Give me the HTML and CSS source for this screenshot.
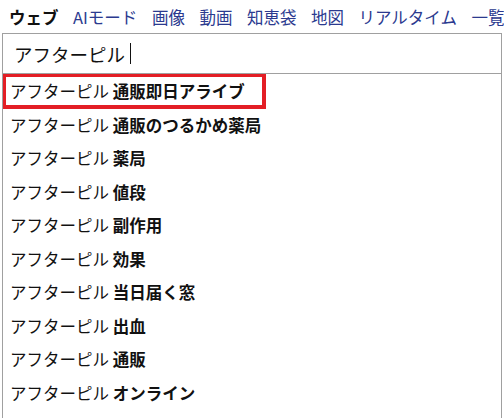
FILE: index.html
```html
<!DOCTYPE html>
<html lang="ja">
<head>
    <meta charset="UTF-8">
    <meta name="viewport" content="width=device-width, initial-scale=1.0">
    <title>アフターピル - 検索</title>
    <link rel="stylesheet" href="styles.css">
</head>
<body>
    <nav class="tabs">
        <span class="tab current">ウェブ</span>
        <a class="tab" href="#">AIモード</a>
        <a class="tab" href="#">画像</a>
        <a class="tab" href="#">動画</a>
        <a class="tab" href="#">知恵袋</a>
        <a class="tab" href="#">地図</a>
        <a class="tab" href="#">リアルタイム</a>
        <a class="tab" href="#">一覧</a>
    </nav>

    <div class="search">
        <div class="query">アフターピル <span class="caret"></span></div>
        <ul class="suggest">
            <li class="marked">アフターピル <b>通販即日アライブ</b><span class="mark"></span></li>
            <li>アフターピル <b>通販のつるかめ薬局</b></li>
            <li>アフターピル <b>薬局</b></li>
            <li>アフターピル <b>値段</b></li>
            <li>アフターピル <b>副作用</b></li>
            <li>アフターピル <b>効果</b></li>
            <li>アフターピル <b>当日届く窓</b></li>
            <li>アフターピル <b>出血</b></li>
            <li>アフターピル <b>通販</b></li>
            <li>アフターピル <b>オンライン</b></li>
        </ul>
    </div>
</body>
</html>
```

FILE: styles.css
```css
body {
    font-family: "Noto Sans CJK JP", "Noto Sans", sans-serif;
    margin: 0;
    background: #fff;
    color: #111;
    overflow: hidden;
    height: 418px;
}

.tabs {
    display: flex;
    gap: 14.5px;
    height: 33px;
    align-items: center;
    padding-left: 9px;
    font-size: 16.5px;
    white-space: nowrap;
    overflow: hidden;
}

.tab {
    color: #2b3a8f;
    text-decoration: none;
}

.tab.current {
    color: #111;
    font-weight: bold;
}

.search {
    margin-left: 2px;
    width: 500px;
}

.query {
    border: 1px solid #a0a0a0;
    height: 39px;
    padding-left: 11px;
    font-size: 18.5px;
    display: flex;
    align-items: center;
    white-space: pre;
}

.caret {
    display: inline-block;
    width: 0;
    height: 21px;
    border-left: 1px solid #111;
    margin-left: 1px;
}

.suggest {
    list-style: none;
    margin: 0;
    padding: 0;
    box-sizing: border-box;
    border-left: 1px solid #a0a0a0;
    border-right: 1px solid #a0a0a0;
    height: 344px;
    overflow: hidden;
}

.suggest li {
    position: relative;
    height: 33.5px;
    line-height: 33.5px;
    padding-left: 7px;
    font-size: 16.5px;
    white-space: nowrap;
}

.suggest li:first-child {
    margin-top: 1px;
}

.suggest b {
    font-weight: bold;
}

/* red annotation frame drawn over the first suggestion */
.mark {
    position: absolute;
    left: -1px;
    top: -2px;
    width: 256px;
    height: 28px;
    border: 4px solid #e31e25;
}
```
